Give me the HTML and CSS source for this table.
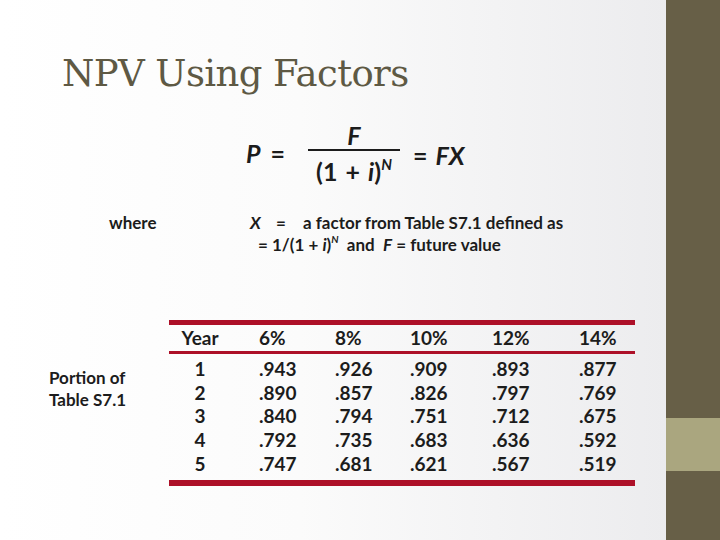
FILE: index.html
```html
<!DOCTYPE html>
<html>
<head>
<meta charset="utf-8">
<link rel="stylesheet" href="styles.css">
</head>
<body>
<div class="slide">
  <main class="content">
    <h1 class="title">NPV Using Factors</h1>
    <div class="formula">
      <span class="lhs"><i>P</i> =</span>
      <span class="frac">
        <span class="num"><i>F</i></span>
        <span class="bar"></span>
        <span class="den">(1 + <i>i</i>)<sup><i>N</i></sup></span>
      </span>
      <span class="rhs">= <i>FX</i></span>
    </div>
    <div class="where">
      <span class="where-label">where</span>
      <div class="where-text">
        <div class="line1"><i class="x">X</i><span class="eq">=</span><span>a factor from Table S7.1 defined as</span></div>
        <div class="line2">= 1/(1 + <i>i</i>)<sup><i>N</i></sup>&nbsp; and&nbsp; <i>F</i> = future value</div>
      </div>
    </div>
    <div class="table-area">
      <div class="table-label">Portion of<br>Table S7.1</div>
      <div class="table">
        <div class="row head">
          <span class="c0">Year</span><span>6%</span><span>8%</span><span>10%</span><span>12%</span><span>14%</span>
        </div>
        <div class="body">
          <div class="row"><span class="c0">1</span><span>.943</span><span>.926</span><span>.909</span><span>.893</span><span>.877</span></div>
          <div class="row"><span class="c0">2</span><span>.890</span><span>.857</span><span>.826</span><span>.797</span><span>.769</span></div>
          <div class="row"><span class="c0">3</span><span>.840</span><span>.794</span><span>.751</span><span>.712</span><span>.675</span></div>
          <div class="row"><span class="c0">4</span><span>.792</span><span>.735</span><span>.683</span><span>.636</span><span>.592</span></div>
          <div class="row"><span class="c0">5</span><span>.747</span><span>.681</span><span>.621</span><span>.567</span><span>.519</span></div>
        </div>
      </div>
    </div>
  </main>
  <aside class="sidebar"><div class="accent"></div></aside>
</div>
</body>
</html>
```
FILE: styles.css
```css
html, body {
  margin: 0;
  padding: 0;
}
body {
  width: 720px;
  height: 540px;
  overflow: hidden;
}
.slide {
  display: flex;
  width: 720px;
  height: 540px;
}
.content {
  flex: 0 0 666px;
  display: flex;
  flex-direction: column;
  background: linear-gradient(to right, #ffffff 0%, #fbfbfb 45%, #ececee 100%);
  font-family: "Lato", "Liberation Sans", sans-serif;
  color: #1c1c1c;
}
.sidebar {
  flex: 1;
  background: #675f47;
  display: flex;
  flex-direction: column;
}
.accent {
  margin-top: 418px;
  height: 53px;
  background: #aaa67f;
}
.title {
  margin: 52px 0 0 62px;
  font-family: "DejaVu Serif", serif;
  font-weight: normal;
  font-size: 37px;
  line-height: 44px;
  color: #5e5944;
  letter-spacing: -0.6px;
}
i { font-style: italic; }
sup {
  font-size: 0.6em;
  line-height: 0;
  vertical-align: 0.75em;
}
.formula {
  margin-top: 26px;
  padding-left: 246px;
  display: flex;
  align-items: center;
  font-size: 25px;
  font-weight: 700;
}
.lhs { width: 62px; word-spacing: 4px; }
.frac {
  display: flex;
  flex-direction: column;
  align-items: center;
  width: 92px;
}
.num { line-height: 26px; }
.bar {
  width: 92px;
  height: 2px;
  background: #1c1c1c;
  margin: 1px 0 7px;
}
.den { line-height: 26px; word-spacing: 2px; }
.rhs { margin-left: 13px; margin-top: 4px; word-spacing: 2px; }
.where {
  margin-top: 28px;
  padding-left: 109px;
  display: flex;
  font-size: 17px;
  font-weight: 700;
  line-height: 22px;
}
.where-label { width: 141px; }
.line1 { display: flex; }
.x { width: 26px; }
.eq { width: 27px; }
.line2 { margin-left: 8px; }
.table-area {
  margin-top: 64px;
  display: flex;
  align-items: flex-start;
}
.table-label {
  flex: 0 0 169px;
  padding-left: 49px;
  box-sizing: border-box;
  font-size: 17px;
  font-weight: 700;
  line-height: 22px;
  margin-top: 47px;
}
.table {
  width: 466px;
  border-top: 5px solid #ad1028;
  border-bottom: 6px solid #ad1028;
  font-size: 19px;
  font-weight: 700;
}
.row {
  display: grid;
  grid-template-columns: 90px 76px 75px 82px 87px 56px;
  line-height: 23.7px;
}
.head {
  line-height: 26px;
  border-bottom: 3px solid #ad1028;
}
.c0 {
  text-align: center;
  padding-right: 28px;
}
.body {
  padding: 3px 0 4px;
}
```
